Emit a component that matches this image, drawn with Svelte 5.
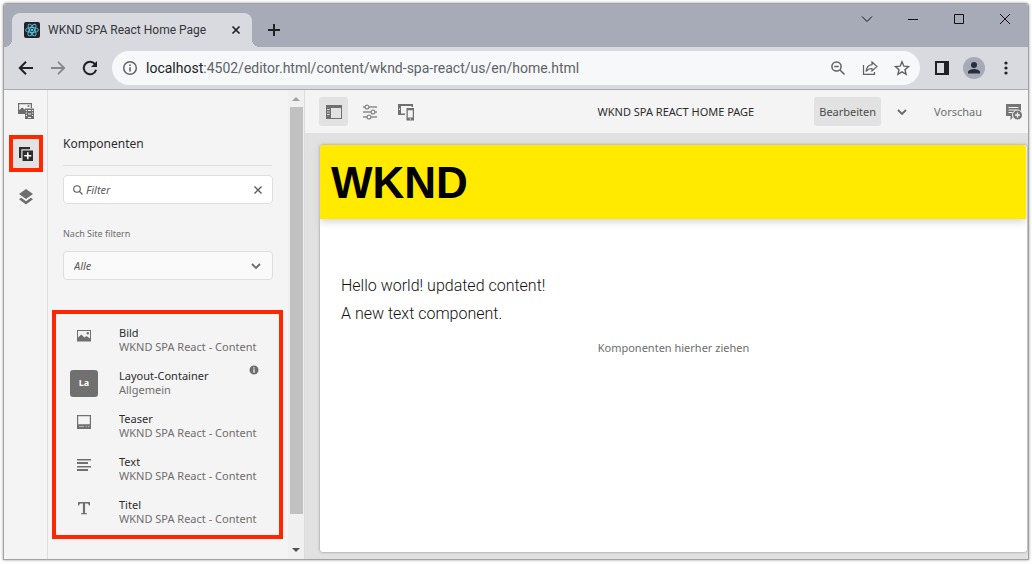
<script>
  let filter = $state('');
  const group = 'WKND SPA React - Content';
  const components = [
    { icon: 'image', title: 'Bild', group },
    { icon: 'layout', title: 'Layout-Container', group: 'Allgemein', info: true },
    { icon: 'teaser', title: 'Teaser', group },
    { icon: 'text', title: 'Text', group },
    { icon: 'title', title: 'Titel', group }
  ];
</script>

<div class="window">
  <header class="tabs">
    <div class="tab">
      <svg width="16" height="16" viewBox="0 0 16 16">
        <rect width="16" height="16" rx="2" fill="#20232a" />
        <g fill="none" stroke="#5ac8e0" stroke-width="0.9">
          <ellipse cx="8" cy="8" rx="6.5" ry="2.5" />
          <ellipse cx="8" cy="8" rx="6.5" ry="2.5" transform="rotate(60 8 8)" />
          <ellipse cx="8" cy="8" rx="6.5" ry="2.5" transform="rotate(120 8 8)" />
        </g>
        <circle cx="8" cy="8" r="1.3" fill="#5ac8e0" />
      </svg>
      <span class="tab-title">WKND SPA React Home Page</span>
      <button aria-label="Tab schließen">
        <svg width="16" height="16" viewBox="0 0 16 16" stroke="#202124" stroke-width="1.7"><path d="M4.5 4.5l7 7M11.5 4.5l-7 7" /></svg>
      </button>
    </div>
    <button class="new-tab" aria-label="Neuer Tab">
      <svg width="16" height="16" viewBox="0 0 16 16" stroke="#202124" stroke-width="2"><path d="M8 2v12M2 8h12" /></svg>
    </button>
    <div class="controls">
      <button aria-label="Tabs suchen"><svg width="12" height="12" viewBox="0 0 12 12"><path d="M1 3.5l5 5 5-5" /></svg></button>
      <button aria-label="Minimieren"><svg width="12" height="12" viewBox="0 0 12 12"><path d="M1 6.5h10" /></svg></button>
      <button aria-label="Maximieren"><svg width="12" height="12" viewBox="0 0 12 12"><path d="M1.500 1.500h9v9h-9z" /></svg></button>
      <button aria-label="Schließen"><svg width="12" height="12" viewBox="0 0 12 12"><path d="M1 1l10 10M11 1L1 11" /></svg></button>
    </div>
  </header>

  <nav class="browser-bar">
    <button aria-label="Zurück"><svg width="16" height="16" viewBox="0 0 16 16" stroke="#202124" stroke-width="2" fill="none"><path d="M15 8H2.500M8 1.800L1.800 8 8 14.200" /></svg></button>
    <button aria-label="Vorwärts"><svg width="16" height="16" viewBox="0 0 16 16" stroke="#85878c" stroke-width="1.800" fill="none"><path d="M1 8h12.500M8 1.800L14.200 8 8 14.200" /></svg></button>
    <button aria-label="Neu laden">
      <svg width="16" height="16" viewBox="0 0 16 16"><path d="M13.300 4.500A6.300 6.300 0 1 0 14.100 9.800" fill="none" stroke="#202124" stroke-width="2" /><path d="M15 1v6H9z" fill="#202124" /></svg>
    </button>
    <div class="address">
      <svg width="16" height="16" viewBox="0 0 16 16"><circle cx="8" cy="8" r="6.300" fill="none" stroke="#5f6368" stroke-width="1.500" /><path d="M7.200 7.200h1.600v4.300H7.200zM7.200 4.500h1.600v1.600H7.200z" fill="#5f6368" /></svg>
      <a href="#home"><b>localhost</b>:4502/editor.html/content/wknd-spa-react/us/en/home.html</a>
      <button aria-label="Zoom"><svg width="16" height="16" viewBox="0 0 16 16" fill="none" stroke="#5f6368" stroke-width="1.500"><circle cx="6.500" cy="6.500" r="4.600" /><path d="M10 10l4.500 4.500M4.300 6.500h4.400" /></svg></button>
      <button aria-label="Teilen"><svg width="16" height="16" viewBox="0 0 16 16" fill="none" stroke="#5f6368" stroke-width="1.200"><path d="M1.500 5v9.400h11V12M10 2l5 4.500-5 4.500V8.500C7.500 8.500 5.500 9.200 4 11.500 4.500 7.500 7 5 10 4.700z" /></svg></button>
      <button aria-label="Lesezeichen"><svg width="16" height="16" viewBox="0 0 16 16" fill="none" stroke="#5f6368" stroke-width="1.400"><path d="M8 1.800l1.900 4.400 4.600.4-3.500 3.100 1.100 4.600L8 11.900l-4.100 2.400L5 9.700 1.500 6.600l4.600-.4z" /></svg></button>
    </div>
    <button aria-label="Seitenleiste"><svg width="16" height="16" viewBox="0 0 16 16"><path d="M1 1h14v14H1zM3 3v10h7V3z" fill="#202124" fill-rule="evenodd" /></svg></button>
    <button class="avatar" aria-label="Profil"><svg width="22" height="22" viewBox="0 0 22 22"><circle cx="11" cy="11" r="11" fill="#a6aab7" /><circle cx="11" cy="8" r="3" fill="#26303c" /><path d="M5 16.500v-1.500c0-2 4-3 6-3s6 1 6 3v1.500z" fill="#26303c" /></svg></button>
    <button aria-label="Menü"><svg width="16" height="16" viewBox="0 0 16 16" fill="#202124"><circle cx="8" cy="3" r="1.600" /><circle cx="8" cy="8" r="1.600" /><circle cx="8" cy="13" r="1.600" /></svg></button>
  </nav>

  <div class="editor">
    <aside class="rail">
      <button aria-label="Assets">
        <svg width="18" height="18" viewBox="0 0 18 18"><path d="M1 1h14v5h-1.200V2.200H2.200v6.300L5 6l3 2V12H1z" fill="#6e6e6e" /><path d="M2 8.500L5 5.500l3 2.200V12H2z" fill="#6e6e6e" /><circle cx="11.500" cy="4" r="1" fill="#6e6e6e" /><path d="M8 6.500h9V17H8z" fill="#6e6e6e" /><path d="M8.800 8.500h1.200M8.800 11h1.200M8.800 13.500h1.200M15 8.500h1.200M15 11h1.200M15 13.500h1.200M11 8.500h3M11 12h3M11 15.500h3" stroke="#f4f4f4" /></svg>
      </button>
      <button class="marked" aria-label="Komponenten">
        <svg width="16" height="16" viewBox="0 0 16 16"><path d="M1 1h11v2.300H3.300V12H1z" fill="#2c2c2c" /><path d="M4.500 4.500H15V15H4.500z" fill="#2c2c2c" /><path d="M9.800 6.300v7M6.300 9.800h7" stroke="#fff" stroke-width="1.500" /></svg>
      </button>
      <button aria-label="Inhaltsbaum">
        <svg width="16" height="18" viewBox="0 0 16 18" fill="#6e6e6e"><path d="M8 1l7 5-7 5-7-5z" /><path d="M3.200 9.800L1 11.300l7 5.200 7-5.200-2.200-1.500L8 13.200z" /></svg>
      </button>
    </aside>

    <section class="panel">
      <div class="panel-body">
        <h2>Komponenten</h2>
        <div class="search">
          <svg width="12" height="12" viewBox="0 0 12 12" fill="none" stroke="#5a5a5a" stroke-width="1.100"><circle cx="5" cy="5" r="3.300" /><path d="M7.400 7.400L10.500 10.500" /></svg>
          <input type="text" aria-label="Filter" placeholder="Filter" bind:value={filter} />
          <button aria-label="Löschen" onclick={() => (filter = '')}><svg width="10" height="10" viewBox="0 0 10 10" stroke="#5a5a5a" stroke-width="1.400"><path d="M1.500 1.500l7 7M8.500 1.500l-7 7" /></svg></button>
        </div>
        <label for="site">Nach Site filtern</label>
        <div class="select">
          <select id="site"><option>Alle</option></select>
          <svg width="10" height="10" viewBox="0 0 10 10" fill="none" stroke="#6a6a6a" stroke-width="1.800"><path d="M1 3l4 4 4-4" /></svg>
        </div>
        <ul class="components">
          {#each components as item}
            <li>
              <span class="icon">
                {#if item.icon === 'image'}
                  <svg width="16" height="14" viewBox="0 0 16 14"><path d="M1 1h14v11.500H1zM2 2v6.500l3.300-3 3.200 3 2-1.500L14 9.500V2z" fill="#707070" fill-rule="evenodd" /><circle cx="11.800" cy="4.300" r="1.200" fill="#707070" /></svg>
                {:else if item.icon === 'layout'}
                  <span class="badge">La</span>
                {:else if item.icon === 'teaser'}
                  <svg width="14" height="16" viewBox="0 0 14 16"><path d="M0 1h14v14H0zM1.200 2.200v8h11.600v-8z" fill="#707070" fill-rule="evenodd" /><path d="M2 12.500h5M8.500 12.500h1.500M11 12.500h1.500" stroke="#b4b4b4" /></svg>
                {:else if item.icon === 'text'}
                  <svg width="14" height="14" viewBox="0 0 14 14" fill="#707070"><path d="M0 1h14v1.500H0zM0 4h11v2H0zM0 8h14v1.500H0zM0 11h11v2H0z" /></svg>
                {:else}
                  <svg width="14" height="14" viewBox="0 0 14 14" fill="#707070"><path d="M1 1h12v3.500h-1.200C11.700 3 11.300 2.500 9.500 2.500H8.100V12l1.900.3v1H4v-1l1.900-.3V2.500H4.500C2.700 2.500 2.300 3 2.200 4.500H1z" /></svg>
                {/if}
              </span>
              <span class="names"><strong>{item.title}</strong><span>{item.group}</span></span>
              {#if item.info}
                <svg class="info" width="10" height="10" viewBox="0 0 10 10"><circle cx="5" cy="5" r="4.500" fill="#6e6e6e" /><path d="M5 4.200v3.600M5 2.200v1.200" stroke="#f4f4f4" stroke-width="1.300" /></svg>
              {/if}
            </li>
          {/each}
        </ul>
      </div>
      <div class="scrollbar" aria-hidden="true">
        <svg width="8" height="5" viewBox="0 0 8 5"><path d="M0 5l4-4 4 4z" fill="#a0a0a0" /></svg>
        <div class="thumb"></div>
        <svg width="8" height="5" viewBox="0 0 8 5"><path d="M0 0l4 4 4-4z" fill="#505050" /></svg>
      </div>
    </section>

    <main>
      <div class="page-bar">
        <button class="tool on" aria-label="Seitliches Bedienfeld"><svg width="16" height="14" viewBox="0 0 16 14"><path d="M0 0h16v14H0zM5 3v10h10V3z" fill="#707070" fill-rule="evenodd" /><path d="M1 4.500h2.700M1 7h2.700M1 9.500h2.700" stroke="#d8d8d8" /></svg></button>
        <button class="tool" aria-label="Seiteninformationen"><svg width="16" height="16" viewBox="0 0 16 16" fill="none" stroke="#8a8a8a" stroke-width="1.300"><path d="M1 3h2M7 3h8M1 8h8M13 8h2M1 13h4M9 13h6" /><circle cx="5" cy="3" r="1.900" /><circle cx="11" cy="8" r="1.900" /><circle cx="7" cy="13" r="1.900" /></svg></button>
        <button class="tool" aria-label="Emulator"><svg width="18" height="18" viewBox="0 0 18 18"><path d="M1 1h15v3h-1.500V3H4v7.500h4V12H1z" fill="#707070" /><path d="M9.500 5H17v12.500H9.500zM10.800 7.300v7.200h5V7.300z" fill="#707070" fill-rule="evenodd" /><circle cx="13.300" cy="16" r=".7" fill="#f4f4f4" /><path d="M2.500 5.500v1.500" stroke="#f4f4f4" /></svg></button>
        <h1>WKND SPA REACT HOME PAGE</h1>
        <button class="mode on">Bearbeiten</button>
        <button class="tool chevron" aria-label="Modus"><svg width="10" height="10" viewBox="0 0 10 10" fill="none" stroke="#6a6a6a" stroke-width="1.800"><path d="M1 3l4 4 4-4" /></svg></button>
        <button class="mode">Vorschau</button>
        <button class="note" aria-label="Anmerken"><svg width="16" height="18" viewBox="0 0 16 18"><path d="M0 1h15v12H8l-3.500 4v-4H0z" fill="#757575" /><path d="M2.500 4.500h10M2.500 7h8M2.500 9.500h4" stroke="#f4f4f4" stroke-width="1.200" /><circle cx="11.500" cy="12" r="5" fill="#757575" stroke="#f4f4f4" /><path d="M11.500 9.500v5M9 12h5" stroke="#f4f4f4" stroke-width="1.300" /></svg></button>
      </div>
      <article class="canvas">
        <div class="brand">WKND</div>
        <div class="copy">
          <p>Hello world! updated content!</p>
          <p>A new text component.</p>
        </div>
        <div class="drop">Komponenten hierher ziehen</div>
      </article>
    </main>
  </div>
</div>

<style>
  :global(body) { background: #fff; }
  * { box-sizing: border-box; }
  :global(#app) { display: flow-root; }
  svg { display: block; flex: none; }
  button { display: flex; align-items: center; justify-content: center; flex: none; padding: 0; border: 0; background: none; font: inherit; color: inherit; }
  .window {
    display: flex;
    flex-direction: column;
    min-height: calc(100vh - 9px);
    margin: 4px 4px 5px;
    overflow: hidden;
    border-radius: 3px 3px 0 0;
    background: #f4f4f4;
    box-shadow: 0 0 0 1px #a2a2a2, 0 0 3px 1px #999;
    font: 11px/14px "Noto Sans", sans-serif;
    color: #2c2c2c;
  }
  .tabs { display: flex; align-items: center; height: 43px; padding-left: 8px; background: #a7abb7; }
  .tab { display: flex; align-items: center; align-self: flex-end; position: relative; width: 240px; height: 34px; padding: 0 8px 0 12px; border-radius: 8px 8px 0 0; background: #d9dae0; color: #34363a; }
  .tab::before, .tab::after { content: ""; position: absolute; bottom: 0; width: 8px; height: 8px; }
  .tab::before { left: -8px; background: radial-gradient(circle at 0 0, transparent 8px, #d9dae0 8px); }
  .tab::after { right: -8px; background: radial-gradient(circle at 100% 0, transparent 8px, #d9dae0 8px); }
  .tab-title { flex: 1; margin-left: 8px; font-family: Roboto, sans-serif; font-size: 12px; white-space: nowrap; }
  .new-tab { width: 44px; padding-top: 8px; }
  .controls { display: flex; align-self: flex-start; margin-left: auto; }
  .controls button { width: 46px; height: 30px; }
  .controls svg { fill: none; stroke: #111; stroke-width: 1; }
  .browser-bar { display: flex; align-items: center; height: 43px; padding: 0 14px; gap: 16px; border-bottom: 1px solid #a9abb1; background: #d9dae0; }
  .avatar { width: 16px; }
  .address { display: flex; flex: 1; align-items: center; gap: 16px; height: 34px; min-width: 0; margin: 0 -2px; padding: 0 10px; border-radius: 17px; background: #f6f8fa; }
  .address a { flex: 1; min-width: 0; overflow: hidden; margin-left: -8px; font: 14px/20px Roboto, sans-serif; color: #5f6368; text-decoration: none; white-space: nowrap; }
  .address b { font-weight: 400; color: #202124; }
  .editor { display: grid; flex: 1; grid-template-columns: 44px 257px 1fr; }
  .rail { display: flex; flex-direction: column; align-items: center; gap: 6px; padding-top: 2px; border-right: 1px solid #dedede; }
  .rail button { width: 34px; height: 37px; }
  .rail .marked { border: 4px solid #ff2600; background: #e2e2e2; }
  .panel { display: flex; min-width: 0; border-right: 1px solid #dcdcdc; }
  .panel-body { flex: 1; min-width: 0; padding: 44px 5px 20px 4px; }
  h2 { margin: 0 11px 9px; padding-bottom: 11px; border-bottom: 1px solid #dedede; font-size: 12px; font-weight: 400; line-height: 20px; }
  .search, .select { display: flex; align-items: center; height: 29px; margin: 0 10px 0 11px; border: 1px solid #dedede; border-radius: 4px; background: #fff; }
  .search { padding: 0 9px 0 8px; }
  .search input { flex: 1; min-width: 0; padding: 0 2px; border: 0; outline: 0; background: none; font: inherit; }
  .search input::placeholder { font-style: italic; color: #5c5c5c; opacity: 1; }
  label { display: block; margin: 23px 11px 10px; font-size: 9px; line-height: 14px; color: #6e6e6e; }
  .select { padding-right: 11px; background: #fafafa; }
  select { flex: 1; padding: 0 0 0 10px; border: 0; appearance: none; background: none; font: inherit; font-style: italic; color: #5c5c5c; }
  .components { margin: 30px 0 0; padding: 12px 14px 0; border: 4px solid #ff2600; list-style: none; }
  li { display: flex; height: 43px; }
  li:last-child { height: 37px; }
  .icon { display: flex; flex: none; align-items: center; justify-content: center; width: 28px; height: 20px; }
  .badge { display: flex; align-items: center; justify-content: center; flex: none; width: 28px; height: 27px; margin-top: 8px; border-radius: 3px; background: #707070; font-size: 9px; font-weight: 700; color: #fff; }
  .names { display: flex; flex: 1; flex-direction: column; min-width: 0; margin-left: 21px; color: #6e6e6e; white-space: nowrap; }
  .names strong { font-weight: 400; color: #2c2c2c; }
  .info { margin-right: 6px; margin-top: -4px; }
  .scrollbar { display: flex; flex: none; flex-direction: column; align-items: center; gap: 6px; width: 16px; padding: 6px 0; background: #f0f0f0; }
  .thumb { flex: 1; width: 13px; margin-bottom: 28px; background: #c1c1c1; }
  main { display: flex; flex-direction: column; min-width: 0; background: #e1e1e1; }
  .page-bar { display: flex; align-items: center; height: 43px; padding-left: 14px; gap: 7px; background: #f4f4f4; color: #6e6e6e; }
  .tool, .mode { height: 29px; min-width: 29px; border-radius: 3px; }
  .on { background: #e2e2e2; color: #4b4b4b; }
  h1 { flex: 1; margin: 0; padding-right: 53px; font-size: 11px; font-weight: 400; line-height: 16px; text-align: right; white-space: nowrap; color: #2c2c2c; }
  .mode { padding: 0 5px; }
  .chevron { margin: 0 6px 0 -1px; }
  .note { width: 34px; justify-content: flex-end; padding-right: 6px; }
  .canvas { flex: 1; margin: 12px 1px 7px 15px; border-radius: 3px; background: #fff; box-shadow: 0 0 3px #888; }
  .brand { height: 74px; margin-right: 1px; padding-left: 11px; border-radius: 3px 3px 0 0; background: #ffea00; box-shadow: 0 2px 8px #ccc; font: 700 44px/76px "Liberation Sans", sans-serif; color: #000; }
  .copy { padding: 53px 21px 0; font: 300 16px/28px Roboto, sans-serif; color: #111; }
  p { margin: 0; }
  .drop { margin-top: 12px; line-height: 16px; text-align: center; color: #6e6e6e; }
</style>
